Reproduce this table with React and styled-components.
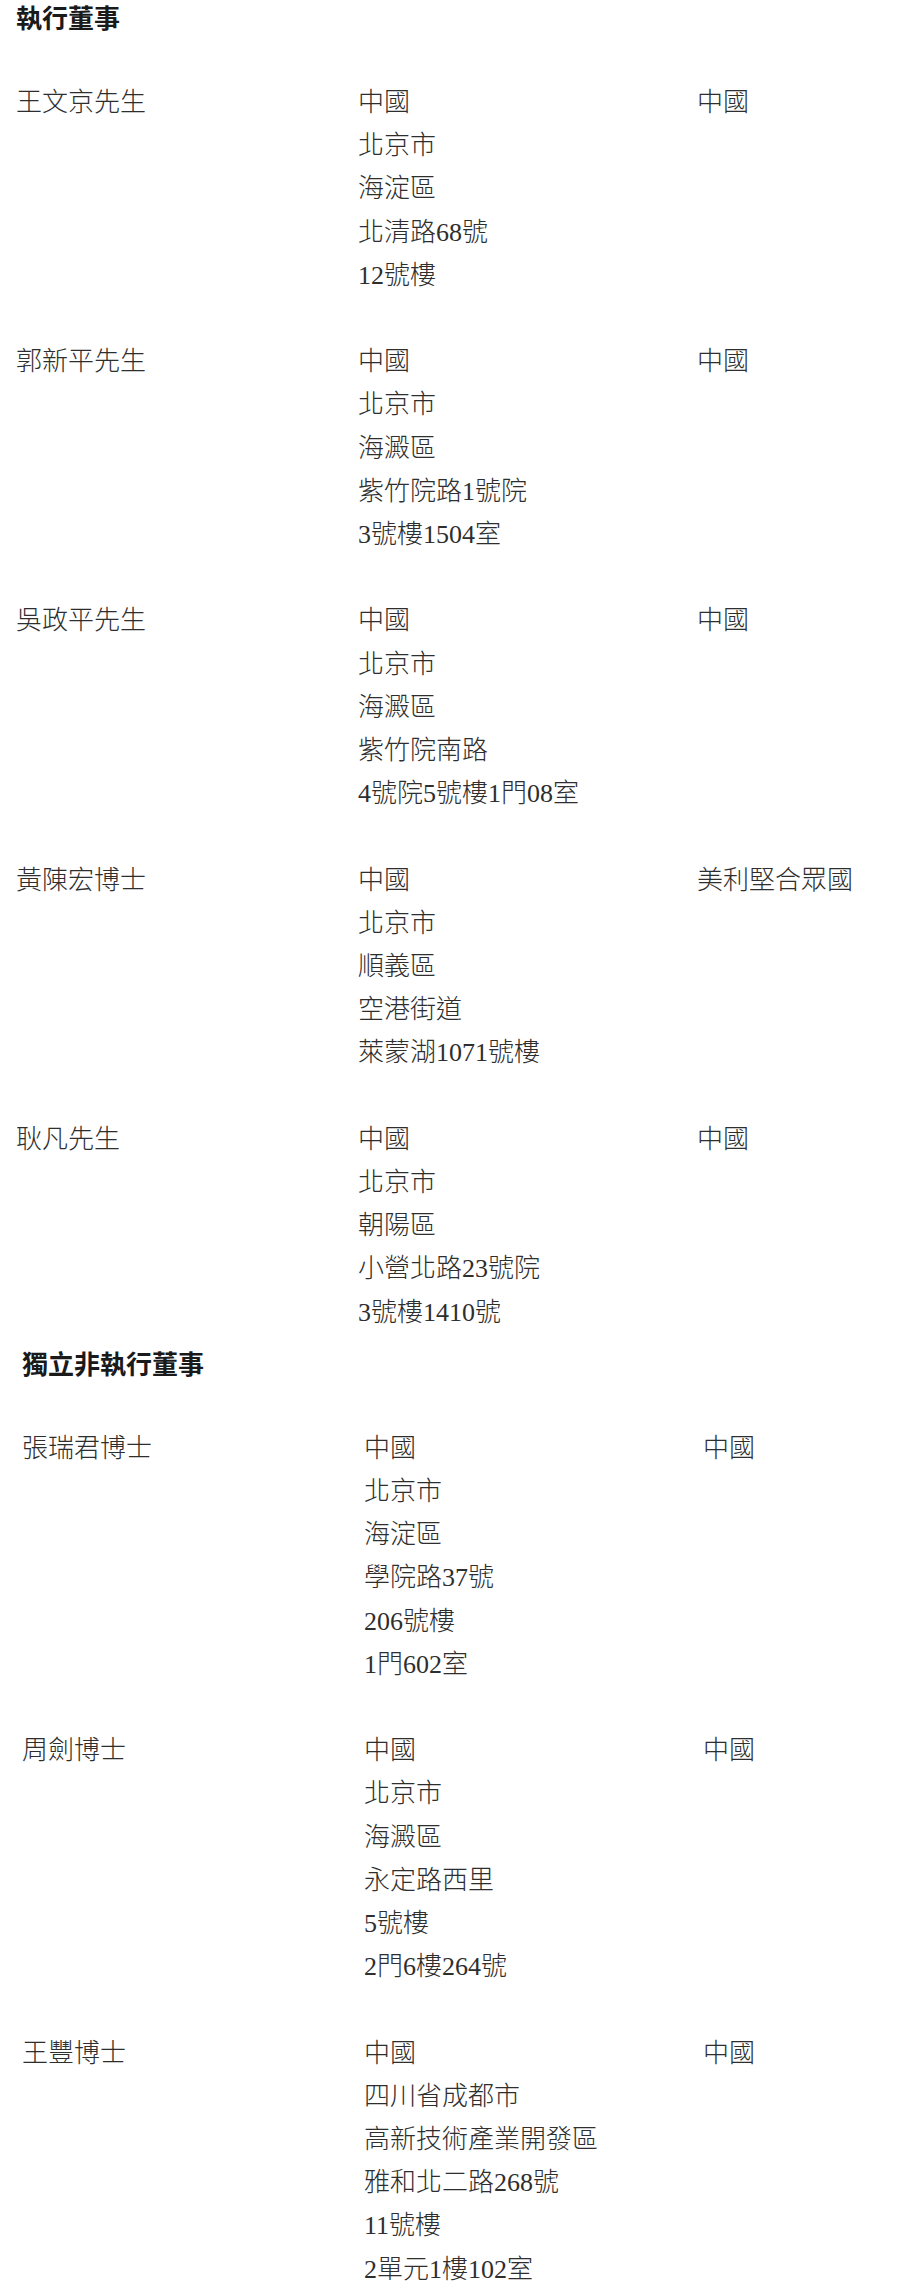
import React from "react";
import styled, { createGlobalStyle } from "styled-components";

const GlobalStyle = createGlobalStyle`
  html, body {
    margin: 0;
    padding: 0;
    background: #ffffff;
  }
  body {
    font-family: "Liberation Serif", "Noto Sans CJK TC", serif;
    color: #1e1e1e;
  }
`;

const executive = [
  {
    name: "王文京先生",
    address: ["中國", "北京市", "海淀區", "北清路68號", "12號樓"],
    nationality: "中國",
  },
  {
    name: "郭新平先生",
    address: ["中國", "北京市", "海澱區", "紫竹院路1號院", "3號樓1504室"],
    nationality: "中國",
  },
  {
    name: "吳政平先生",
    address: ["中國", "北京市", "海澱區", "紫竹院南路", "4號院5號樓1門08室"],
    nationality: "中國",
  },
  {
    name: "黃陳宏博士",
    address: ["中國", "北京市", "順義區", "空港街道", "萊蒙湖1071號樓"],
    nationality: "美利堅合眾國",
  },
  {
    name: "耿凡先生",
    address: ["中國", "北京市", "朝陽區", "小營北路23號院", "3號樓1410號"],
    nationality: "中國",
  },
];

const independent = [
  {
    name: "張瑞君博士",
    address: ["中國", "北京市", "海淀區", "學院路37號", "206號樓", "1門602室"],
    nationality: "中國",
  },
  {
    name: "周劍博士",
    address: ["中國", "北京市", "海澱區", "永定路西里", "5號樓", "2門6樓264號"],
    nationality: "中國",
  },
  {
    name: "王豐博士",
    address: [
      "中國",
      "四川省成都市",
      "高新技術產業開發區",
      "雅和北二路268號",
      "11號樓",
      "2單元1樓102室",
    ],
    nationality: "中國",
  },
];

const Page = styled.div`
  width: 914px;
  min-height: 2296px;
  background: #ffffff;
`;

const Section = styled.section`
  padding-left: ${({ $indent }) => $indent}px;
  padding-top: ${({ $top }) => $top}px;
`;

const Heading = styled.h2`
  margin: 0 0 48px 0;
  font-family: "Noto Sans CJK TC", "Noto Sans", sans-serif;
  font-size: 26px;
  font-weight: 700;
  line-height: 33px;
  color: #1a1a1a;
`;

const Entry = styled.div`
  display: grid;
  grid-template-columns: 342px 339px 1fr;
  font-size: 26px;
  font-weight: 300;
  line-height: 43.2px;
  margin-bottom: 43.2px;

  &:last-child {
    margin-bottom: 0;
  }
`;

const Cell = styled.div`
  white-space: nowrap;
  color: #2e2e2e;
`;

const Line = styled.div``;

function DirectorList({ title, people, indent, top }) {
  return (
    <Section $indent={indent} $top={top}>
      <Heading>{title}</Heading>
      {people.map((p) => (
        <Entry key={p.name}>
          <Cell>{p.name}</Cell>
          <Cell>
            {p.address.map((l, i) => (
              <Line key={i}>{l}</Line>
            ))}
          </Cell>
          <Cell>{p.nationality}</Cell>
        </Entry>
      ))}
    </Section>
  );
}

export default function App() {
  return (
    <Page>
      <GlobalStyle />
      <DirectorList title="執行董事" people={executive} indent={16} top={0} />
      <DirectorList
        title="獨立非執行董事"
        people={independent}
        indent={22}
        top={12}
      />
    </Page>
  );
}
